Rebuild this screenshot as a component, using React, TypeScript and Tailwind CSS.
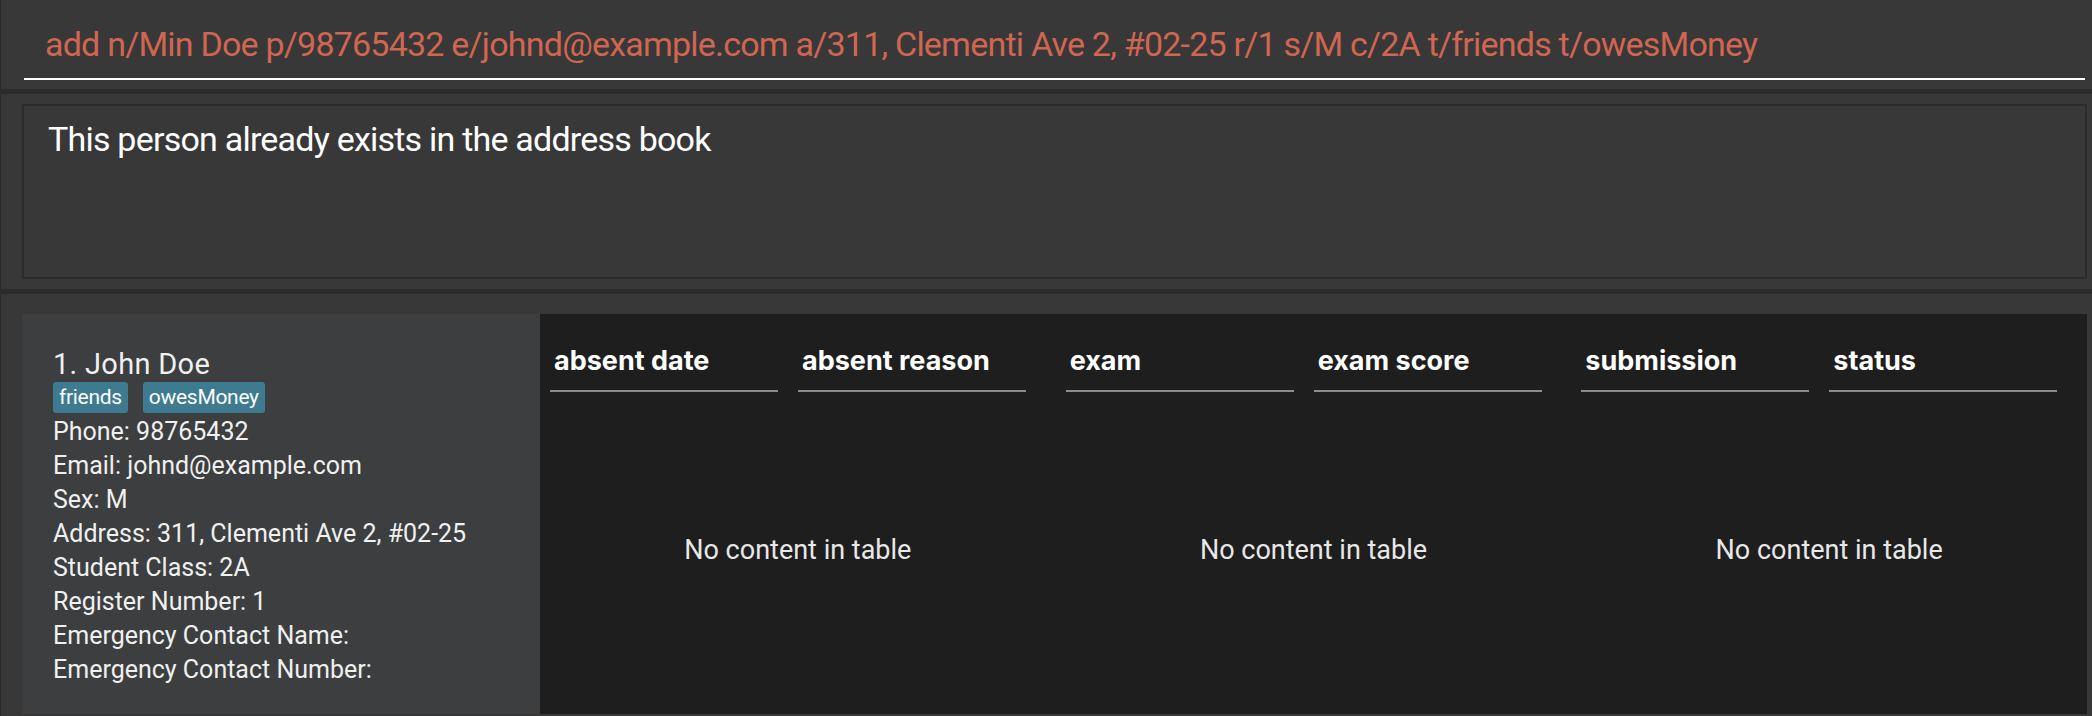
import React from 'react';

const person = {
  name: '1. John Doe',
  tags: ['friends', 'owesMoney'],
  details: [
    'Phone: 98765432',
    'Email: johnd@example.com',
    'Sex: M',
    'Address: 311, Clementi Ave 2, #02-25',
    'Student Class: 2A',
    'Register Number: 1',
    'Emergency Contact Name:',
    'Emergency Contact Number:',
  ],
};

const tables = [
  ['absent date', 'absent reason'],
  ['exam', 'exam score'],
  ['submission', 'status'],
];

const EmptyTable = ({ columns }: { columns: string[] }) => (
  <div className="flex flex-col">
    <div className="flex pt-[31px]">
      {columns.map((col) => (
        <div key={col} className="w-[248px] px-[10px]">
          <div
            className="border-b-2 border-[#8c8c8c] pb-[13px] pl-[4px] text-[27px] leading-[32px] font-bold text-white"
            style={{ fontFamily: 'Inter, Roboto, sans-serif' }}
          >
            {col}
          </div>
        </div>
      ))}
    </div>
    <div className="flex flex-1 items-center justify-center pb-[6px] text-[27px] text-[#e8e8e8]">
      No content in table
    </div>
  </div>
);

export default function App() {
  return (
    <div
      className="flex h-[716px] w-[2092px] flex-col border-l border-[#2b2b2b] bg-[#383838]"
      style={{ fontFamily: 'Roboto, "Liberation Sans", sans-serif' }}
    >
      {/* command box */}
      <div className="pt-[24px] pb-[9px] pl-[23px] pr-[7px]">
        <div className="h-[56px] border-b-2 border-white pl-[21px] text-[34px] leading-[40px] text-[#d06651] tracking-[-0.78px]">
          add n/Min Doe p/98765432 e/johnd@example.com a/311, Clementi Ave 2, #02-25 r/1 s/M c/2A t/friends t/owesMoney
        </div>
      </div>

      <div className="h-[5px] bg-[#2b2b2b]" />

      {/* result display */}
      <div className="py-[10px] pl-[21px] pr-[5px]">
        <div className="h-[175px] border-2 border-[#2b2b2b] pl-[24px] pt-[13px] text-[34px] leading-[40px] text-white tracking-[-0.78px]">
          This person already exists in the address book
        </div>
      </div>

      <div className="h-[5px] bg-[#2b2b2b]" />

      {/* person list + tables */}
      <div className="flex flex-1 pt-[20px] pb-[2px] pl-[21px] pr-[5px]">
        <div className="w-[518px] bg-[#3c3e3f] pl-[31px] pt-[33px] text-[#f0f0f0]">
          <div className="text-[29px] leading-[34px] tracking-[0.3px]">{person.name}</div>
          <div className="mt-px flex gap-[15px]">
            {person.tags.map((tag) => (
              <span
                key={tag}
                className="rounded-[3px] bg-[#3e7b91] px-[6px] text-[21px] leading-[31px] text-white tracking-[-0.3px]"
              >
                {tag}
              </span>
            ))}
          </div>
          <div className="mt-[2px]">
            {person.details.map((line) => (
              <div key={line} className="text-[25px] leading-[34px]">
                {line}
              </div>
            ))}
          </div>
        </div>
        <div className="grid flex-1 grid-cols-3 bg-[#1e1e1e]">
          {tables.map((cols) => (
            <EmptyTable key={cols[0]} columns={cols} />
          ))}
        </div>
      </div>
    </div>
  );
}
